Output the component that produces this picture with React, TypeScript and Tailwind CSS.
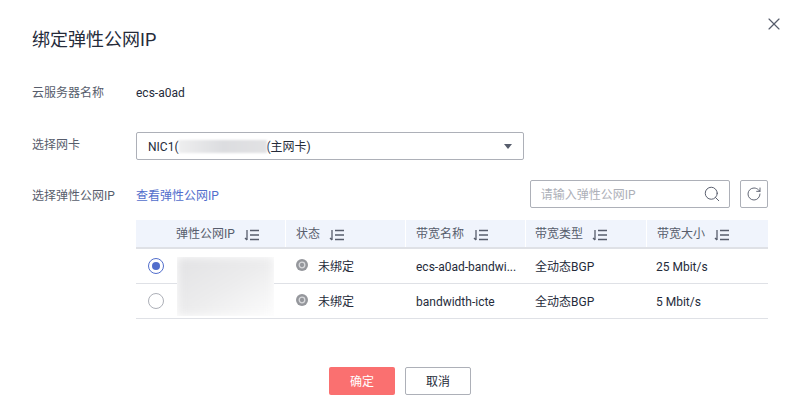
import React from "react";
import { X, Search, RotateCw } from "lucide-react";

function SortIcon() {
  return (
    <svg width="15" height="12" viewBox="0 0 15 12" fill="none" stroke="#575d6c" strokeWidth="1.3" className="shrink-0">
      <path d="M3 1v10M1 9l2 2" />
      <path d="M6 1.5h9M6 6h9M6 10.5h9" />
    </svg>
  );
}

function StatusIcon() {
  return (
    <svg width="12" height="12" viewBox="0 0 12 12" className="mt-[-2px] shrink-0">
      <circle cx="6" cy="6" r="6" fill="#95979c" />
      <circle cx="6" cy="6" r="2.8" fill="none" stroke="#d8d9dc" strokeWidth="1.3" />
    </svg>
  );
}

function HeaderCell({ label, className }: { label: string; className: string }) {
  return (
    <div className={`flex h-full items-center bg-[#f0f4fc] ${className}`}>
      <span className="mt-[1px] text-[#575d6c]">{label}</span>
      <span className="ml-[9px] mt-[3px]">
        <SortIcon />
      </span>
    </div>
  );
}

function Row({ checked, name, bandwidth }: { checked: boolean; name: string; bandwidth: string }) {
  return (
    <div className="flex h-[35px] items-center border-b border-[#dfe1e6] text-[#252b3a]">
      <div className="flex w-[149px] pl-[12px]">
        {checked ? (
          <span className="flex h-4 w-4 items-center justify-center rounded-full border border-[#526ecc]">
            <span className="h-2 w-2 rounded-full bg-[#526ecc]" />
          </span>
        ) : (
          <span className="h-4 w-4 rounded-full border border-[#adb0b8]" />
        )}
      </div>
      <div className="flex w-[120px] items-center pl-[11px]">
        <StatusIcon />
        <span className="ml-[10px] mt-[1px]">未绑定</span>
      </div>
      <div className="mt-[1px] w-[120px] whitespace-nowrap pl-[11px]">{name}</div>
      <div className="mt-[1px] w-[121px] pl-[10px]">全动态BGP</div>
      <div className="mt-[1px] w-[122px] pl-[10px]">{bandwidth}</div>
    </div>
  );
}

export default function App() {
  return (
    <div
      className="relative h-[417px] w-[795px] overflow-hidden bg-white pl-[32px] text-[12px] text-[#252b3a]"
      style={{ fontFamily: 'Roboto, "Noto Sans CJK SC", sans-serif' }}
    >
      <button className="absolute left-[764px] top-[14px] text-[#575d6c]">
        <X size={20} strokeWidth={1.4} />
      </button>

      <h1 className="pt-[28px] text-[18px] leading-[24px] font-normal">绑定弹性公网IP</h1>

      <div className="mt-[32px] flex h-[18px] items-center">
        <span className="w-[104px] text-[#575d6c]">云服务器名称</span>
        <span>ecs-a0ad</span>
      </div>

      <div className="mt-[30px] flex items-center">
        <span className="mt-[-3px] w-[104px] text-[#575d6c]">选择网卡</span>
        <div className="flex h-[28px] w-[388px] items-center justify-between rounded-[2px] border border-[#adb0b8] pl-[11px] pr-[11px]">
          <div className="mt-[1px] flex items-center">
            <span>NIC1(</span>
            <span className="h-[13px] w-[88px] bg-linear-to-r from-[#eeeeef] via-[#dcdde0] to-[#e2e2e4] blur-[1px]" />
            <span>(主网卡)</span>
          </div>
          <span className="h-0 w-0 border-x-[4px] border-t-[5px] border-x-transparent border-t-[#575d6c]" />
        </div>
      </div>

      <div className="mt-[20px] flex h-[28px] items-center">
        <span className="mt-[4px] w-[104px] text-[#575d6c]">选择弹性公网IP</span>
        <a className="mt-[4px] text-[#526ecc]">查看弹性公网IP</a>
        <div className="ml-[311px] flex h-[28px] w-[200px] items-center justify-between rounded-[2px] border border-[#adb0b8] pl-[10px] pr-[8px]">
          <span className="mt-[2px] text-[#adb0b8]">请输入弹性公网IP</span>
          <Search size={18} strokeWidth={1.3} className="text-[#575d6c]" />
        </div>
        <button className="ml-[10px] flex h-[28px] w-[28px] items-center justify-center rounded-[2px] border border-[#adb0b8] text-[#575d6c]">
          <RotateCw size={16} strokeWidth={1.4} />
        </button>
      </div>

      <div className="relative ml-[104px] mt-[12px] w-[632px]">
        <div className="flex h-[29px] items-center gap-px border-b-2 border-[#dfe1e6]">
          <HeaderCell label="弹性公网IP" className="w-[149px] pl-[40px]" />
          <HeaderCell label="状态" className="w-[119px] pl-[10px]" />
          <HeaderCell label="带宽名称" className="w-[119px] pl-[10px]" />
          <HeaderCell label="带宽类型" className="w-[120px] pl-[9px]" />
          <HeaderCell label="带宽大小" className="flex-1 pl-[10px]" />
        </div>
        <Row checked name="ecs-a0ad-bandwi..." bandwidth="25 Mbit/s" />
        <Row checked={false} name="bandwidth-icte" bandwidth="5 Mbit/s" />
        <div className="absolute left-[41px] top-[37px] h-[59px] w-[97px] overflow-hidden bg-white">
          <div className="h-full w-full bg-linear-to-br from-[#e2e2e4] via-[#ececed] to-[#fcfcfc] blur-[4px]" />
        </div>
      </div>

      <div className="mt-[48px] flex gap-[10px] pl-[297px]">
        <button className="h-[28px] w-[66px] rounded-[2px] bg-[#fa7070] pt-[2px] text-white">确定</button>
        <button className="h-[28px] w-[66px] rounded-[2px] border border-[#adb0b8] pt-[2px] text-[#252b3a]">取消</button>
      </div>
    </div>
  );
}
